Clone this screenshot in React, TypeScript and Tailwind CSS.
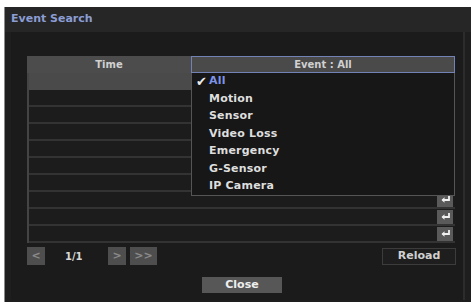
import { Fragment } from 'react'

const events = ['All', 'Motion', 'Sensor', 'Video Loss', 'Emergency', 'G-Sensor', 'IP Camera']

function EnterIcon() {
  return (
    <div className="w-[16px] h-[14px] bg-[#5a5a5a] flex items-center justify-center">
      <svg width="11" height="9" viewBox="0 0 11 9" fill="none">
        <path d="M9 1v4H2.5" stroke="#f0f0f0" strokeWidth="1.8" />
        <path d="M4.5 2.2L1.5 5l3 2.8z" fill="#f0f0f0" />
      </svg>
    </div>
  )
}

function NavButton({ label, wide }: { label: string; wide?: boolean }) {
  return (
    <div
      className={`${wide ? 'w-[27px]' : 'w-[18px]'} h-[18px] bg-[#4e4e4e] flex items-center justify-center text-[#8a8a8a] text-[11px] font-bold`}
    >
      {label}
    </div>
  )
}

export default function App() {
  const rows = Array.from({ length: 10 }, (_, i) => i)

  return (
    <div
      className="w-[476px] h-[304px] bg-white pt-[7px] pl-[4px]"
      style={{ fontFamily: '"DejaVu Sans", sans-serif' }}
    >
      <div className="w-[467px] h-[295px] bg-[#1e1e1e] border-l border-[#8a8a8a] flex flex-col">
        {/* title bar */}
        <div className="h-[25px] bg-[#262626] flex items-center pl-[6px]">
          <span className="text-[11px] font-bold text-[#8b9dd4]">Event Search</span>
        </div>

        <div className="flex-1 mx-[6px] mb-[2px] bg-[#1b1b1b] border-r-2 border-[#2c2c2c] pl-[16px] pt-[24px] flex flex-col">
          {/* table */}
          <div className="relative w-[428px]">
            <div className="flex h-[17px]">
              <div className="w-[164px] bg-[#4c4c4c] flex items-center justify-center text-[10px] font-bold text-[#d0d0d0]">
                Time
              </div>
              <div className="flex-1 bg-[#4a4a4a] border border-[#7282b4] flex items-center justify-center text-[10px] font-bold text-[#d0d0d0]">
                Event : All
              </div>
            </div>
            <div className="border-l-2 border-[#444]">
              {rows.map((i) => (
                <div
                  key={i}
                  className={`h-[17px] flex border-b-2 ${i === 0 ? 'bg-[#4a4a4a] border-[#4a4a4a]' : 'bg-[#1c1c1c] border-[#333]'}`}
                >
                  <div className="flex-1" />
                  <div className="w-[18px] flex items-center justify-start">
                    {i > 0 && <EnterIcon />}
                  </div>
                </div>
              ))}
            </div>

            {/* dropdown menu */}
            <div className="absolute left-[164px] top-[17px] w-[264px] h-[123px] bg-[#171717] border-x border-b border-[#555] flex flex-col">
              {events.map((e, i) => (
                <Fragment key={e}>
                  <div className="h-[17.5px] flex items-center text-[11px] font-bold tracking-[0.2px]">
                    <span className="w-[17px] pl-[4px] text-[#ececec] text-[13px] leading-none">{i === 0 ? '✔' : ''}</span>
                    <span className={i === 0 ? 'text-[#7d93ea]' : 'text-[#dedede]'}>{e}</span>
                  </div>
                </Fragment>
              ))}
            </div>
          </div>

          {/* pager */}
          <div className="w-[429px] flex items-center mt-[4px] h-[18px]">
            <NavButton label="<" />
            <span className="ml-[20px] w-[43px] text-[10px] font-bold text-[#d8d8d8]">1/1</span>
            <NavButton label=">" />
            <div className="w-[4px]" />
            <NavButton label=">>" wide />
            <div className="flex-1" />
            <div className="w-[74px] h-[17px] border border-[#3c3c3c] bg-[#1e1e1e] flex items-center justify-center text-[11px] font-bold text-[#d0d0d0]">
              Reload
            </div>
          </div>

          {/* close */}
          <div className="flex mt-[12px] pl-[175px]">
            <div className="w-[80px] h-[16px] bg-[#575757] flex items-center justify-center text-[11px] font-bold text-[#eeeeee]">
              Close
            </div>
          </div>
        </div>
      </div>
    </div>
  )
}
